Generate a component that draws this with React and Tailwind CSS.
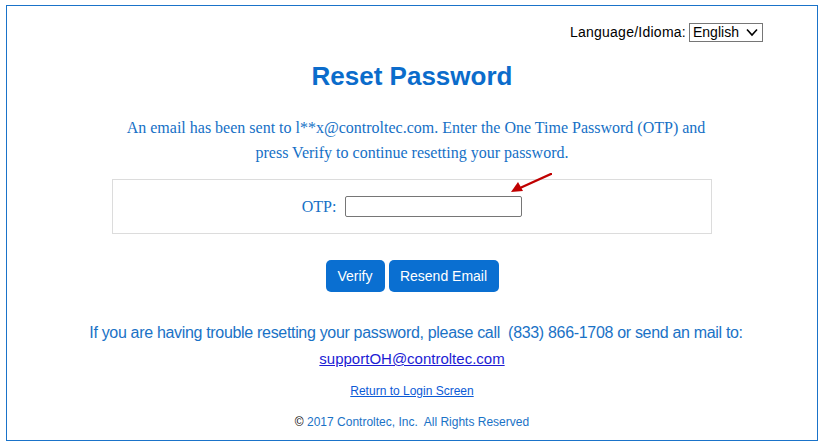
import React from "react";

export default function App() {
  return (
    <div className="w-[821px] h-[443px] bg-white overflow-hidden pt-[5px] pl-[6px]">
      <div className="w-[812px] h-[436px] border border-[#1a73c9] flex flex-col items-center">
        <div className="self-stretch flex justify-end items-center pr-[54px] pt-[16px] font-['Liberation_Sans',Arial,sans-serif] text-[14px] text-black">
          <span className="mr-[3px] tracking-[0.25px]">Language/Idioma:</span>
          <div className="relative w-[74px] h-[19px] border border-[#767676] flex items-center pl-[3px] text-[14px]">
            <span>English</span>
            <svg className="absolute right-[4px] top-[4px]" width="12" height="9" viewBox="0 0 12 9">
              <path d="M1 1.5 L6 7 L11 1.5" fill="none" stroke="#000" strokeWidth="1.6" />
            </svg>
          </div>
        </div>

        <h1 className="mt-[18px] font-['Liberation_Sans',Arial,sans-serif] font-bold text-[26px] leading-[30px] text-[#0b6ccb]">
          Reset Password
        </h1>

        <div className="mt-[24px] w-[600px] flex flex-col items-center font-['Liberation_Serif','Times_New_Roman',serif] text-[16px] leading-[25px] text-[#1570c6]">
          <p className="pl-[8px] whitespace-nowrap">
            An email has been sent to l**x@controltec.com. Enter the One Time Password (OTP) and
          </p>
          <p className="whitespace-nowrap">press Verify to continue resetting your password.</p>
        </div>

        <div className="relative mt-[14px] w-[600px] h-[55px] border border-[#dcdcdc] flex items-center justify-center font-['Liberation_Serif','Times_New_Roman',serif] text-[16px] text-[#1570c6]">
          <span className="mr-[9px]">OTP:</span>
          <div className="w-[177px] h-[21px] border border-[#767676] rounded-[2px] bg-white"></div>
          <svg className="absolute left-[397px] top-[-7px]" width="42" height="22" viewBox="0 0 42 22">
            <line x1="41" y1="1" x2="10" y2="15" stroke="#c00000" strokeWidth="2.4" strokeLinecap="round" />
            <polygon points="1,19 8,9 13,18" fill="#c00000" />
          </svg>
        </div>

        <div className="mt-[26px] flex gap-[4px] font-['Liberation_Sans',Arial,sans-serif] text-[14px] text-white">
          <div className="w-[59px] h-[32px] rounded-[5px] bg-[#0a6fd1] flex items-center justify-center">Verify</div>
          <div className="w-[110px] h-[32px] rounded-[5px] bg-[#0a6fd1] flex items-center justify-center">Resend Email</div>
        </div>

        <p className="mt-[30px] pl-[8px] font-['Liberation_Sans',Arial,sans-serif] text-[16px] leading-[22px] text-[#1a72c6] whitespace-nowrap tracking-[-0.32px]">
          If you are having trouble resetting your password, please call&nbsp; (833) 866-1708 or send an mail to:
        </p>
        <a className="mt-[4px] font-['Liberation_Sans',Arial,sans-serif] text-[15px] leading-[22px] text-[#1c1cd4] underline">
          supportOH@controltec.com
        </a>

        <a className="mt-[13px] font-['Liberation_Sans',Arial,sans-serif] text-[12px] leading-[16px] text-[#0b5ad6] underline">
          Return to Login Screen
        </a>

        <p className="mt-[15px] font-['Liberation_Sans',Arial,sans-serif] text-[12px] leading-[16px] text-[#1a72c6] whitespace-pre">
          <span className="text-black">©</span> 2017 Controltec, Inc.  All Rights Reserved
        </p>
      </div>
    </div>
  );
}
